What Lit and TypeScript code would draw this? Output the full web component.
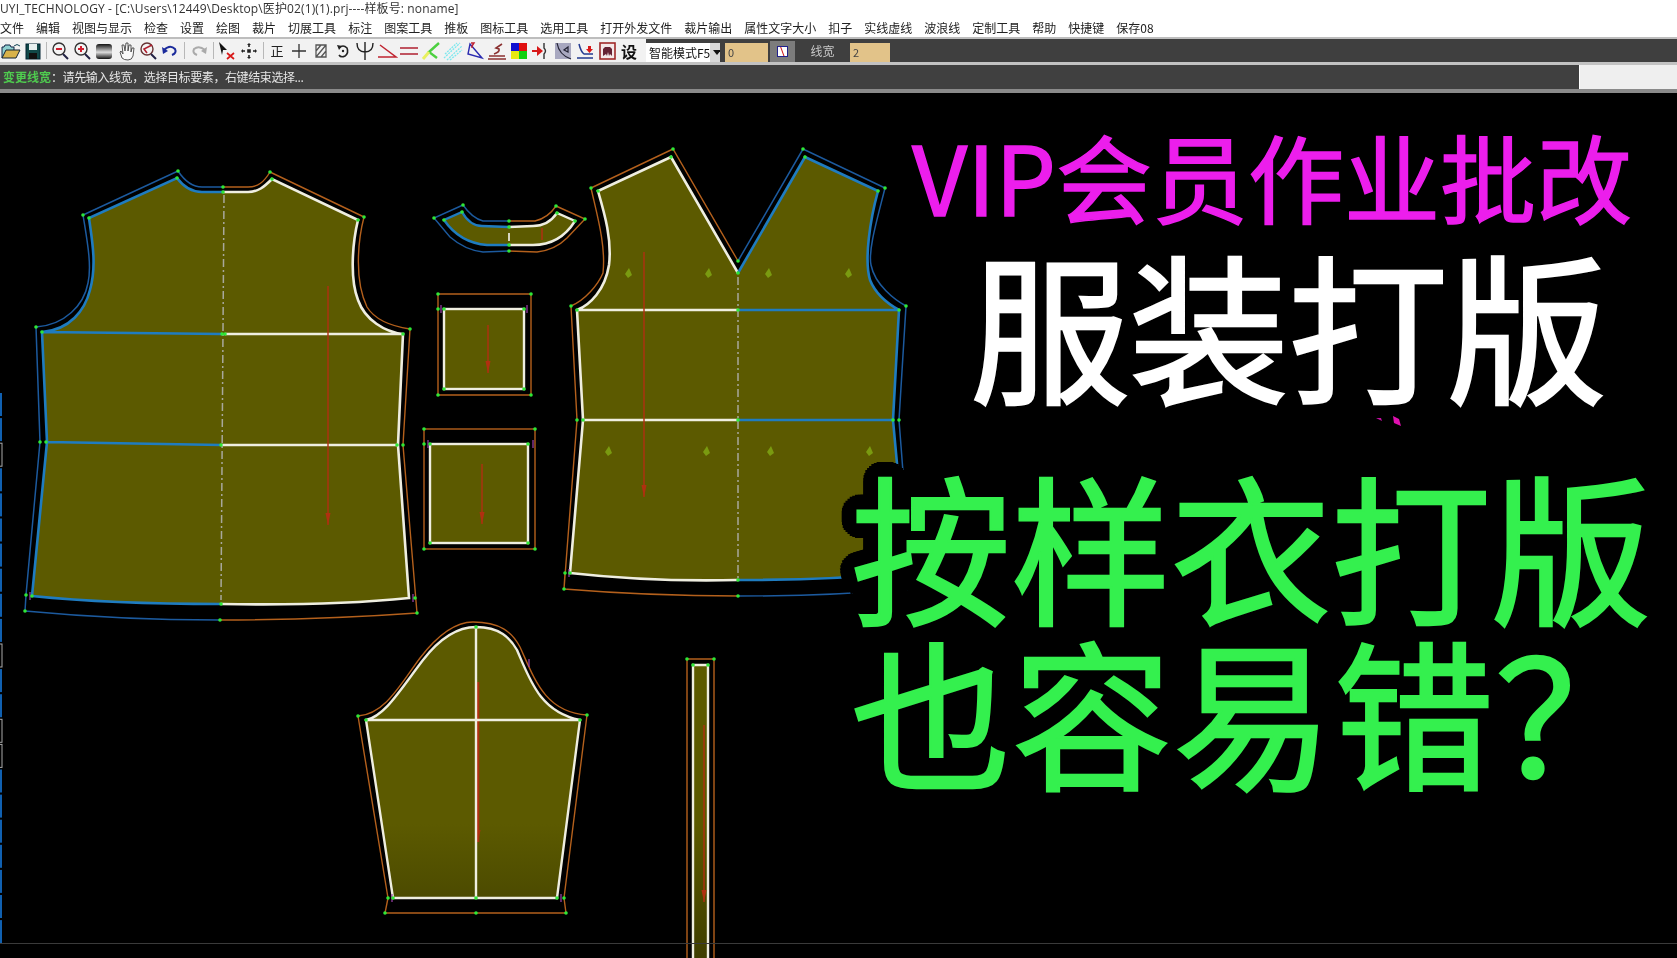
import {LitElement, css, html, svg, unsafeCSS} from 'lit';
import {customElement} from 'lit/decorators.js';

const MENU = [
  '文件', '编辑', '视图与显示', '检查', '设置', '绘图', '裁片', '切展工具', '标注', '图案工具', '推板', '图标工具',
  '选用工具', '打开外发文件', '裁片输出', '属性文字大小', '扣子', '实线虚线', '波浪线', '定制工具', '帮助', '快捷键', '保存08',
];

const icon = (body: unknown) => html`<svg class="ico" viewBox="0 0 22 22">${body}</svg>`;

// toolbar, left to right; 'sep' is a divider with its width
const TOOLS: Array<unknown> = [
  icon(svg`<path d="M2 18V7h2l1-2h5l1 2h3v3" fill="#8fd0d0" stroke="#124" stroke-width="1"/><path d="M2 18l4-8h14l-4 8z" fill="#d8b24a" stroke="#123" stroke-width="1"/><path d="M14 6q3-3 6 0" fill="none" stroke="#145" stroke-width="1"/>`),
  icon(svg`<rect x="4" y="4" width="14" height="15" fill="#114848" stroke="#023" /><rect x="7" y="4" width="8" height="6" fill="#e8f0f0"/><rect x="7" y="13" width="8" height="6" fill="#111"/>`),
  {sep: 5},
  icon(svg`<circle cx="10" cy="9" r="6" fill="#f4f4f4" stroke="#333" stroke-width="1.4"/><path d="M7 9h6" stroke="#d02030" stroke-width="2"/><path d="M14 14l5 5" stroke="#224" stroke-width="2"/>`),
  icon(svg`<circle cx="10" cy="9" r="6" fill="#f4f4f4" stroke="#333" stroke-width="1.4"/><path d="M7 9h6M10 6v6" stroke="#d02030" stroke-width="2"/><path d="M14 14l5 5" stroke="#224" stroke-width="2"/>`),
  icon(svg`<defs><linearGradient id="gr" x1="0" x2="0" y1="0" y2="1"><stop offset="0" stop-color="#111"/><stop offset=".55" stop-color="#ddd"/><stop offset="1" stop-color="#111"/></linearGradient></defs><rect x="3" y="4" width="16" height="15" rx="3" fill="url(#gr)"/>`),
  icon(svg`<path d="M5 12l2 6q2 2 6 2t5-4l1-8-2 0-1 4 0-7-2 0-1 6 0-8-2 0-1 8-1-6-2 0 1 9-2-3z" fill="#f8f8f8" stroke="#444" stroke-width=".9"/>`),
  icon(svg`<circle cx="10" cy="9" r="6" fill="#f4f4f4" stroke="#633" stroke-width="1.4"/><path d="M15 5l-8 4 3 4" fill="none" stroke="#b02030" stroke-width="1.6"/><path d="M14 14l5 5" stroke="#224" stroke-width="2"/>`),
  icon(svg`<path d="M5 10q6-6 11-1 2 4-3 6" fill="none" stroke="#1c2c9c" stroke-width="2"/><path d="M3 7l1 7 5-3z" fill="#1c2c9c"/>`),
  {sep: 7},
  icon(svg`<path d="M17 10q-6-5-11-1-2 4 3 6" fill="none" stroke="#aaa" stroke-width="2"/><path d="M19 7l-1 7-5-3z" fill="#aaa"/>`),
  {sep: 6},
  icon(svg`<path d="M3 2l8 8-4 0-1 5z" fill="#111"/><path d="M11 13l7 6M18 13l-7 6" stroke="#d81818" stroke-width="1.7"/>`),
  icon(svg`<path d="M11 5v2M11 15v2M5 11h2M15 11h2M10 10h2v2h-2z" stroke="#222" stroke-width="1.6"/><path d="M9 5h4l-2-2zM9 17h4l-2 2zM5 9v4l-2-2zM17 9v4l2-2z" fill="#222"/>`),
  {sep: 6},
  html`<span class="glyph">正</span>`,
  icon(svg`<path d="M11 4v14M4 11h14" stroke="#333" stroke-width="1.3"/>`),
  icon(svg`<path d="M6 5h10v12H6z M6 17L16 5M6 11l5-6M11 17l5-6" fill="none" stroke="#555" stroke-width="1.3"/>`),
  icon(svg`<path d="M7 8q4-4 8 0 2 5-2 8-4 2-6-1" fill="none" stroke="#222" stroke-width="1.6"/><path d="M5 5l5 1-3 4z" fill="#222"/><circle cx="11" cy="11" r="1.2" fill="#222"/>`),
  icon(svg`<path d="M3 3q0 9 8 9t8-9M11 2v18" fill="none" stroke="#222" stroke-width="1.4"/>`),
  icon(svg`<path d="M2 17h18L4 5" fill="none" stroke="#c02430" stroke-width="1.5"/>`),
  icon(svg`<path d="M2 8h18M2 14h18" stroke="#b02030" stroke-width="1.6"/>`),
  icon(svg`<path d="M19 3L9 12L17 18" fill="none" stroke="#4cd040" stroke-width="2.4"/><path d="M3 19l6-7" stroke="#e8f060" stroke-width="3"/>`),
  icon(svg`<path d="M2 18L18 3M5 20L20 6M8 20L20 10M3 14L15 3" stroke="#7ce8ee" stroke-width="1.3" stroke-dasharray="2 1"/>`),
  icon(svg`<path d="M6 4l12 14-14-4z" fill="none" stroke="#2a2ab0" stroke-width="1.4"/><path d="M7 3h3l-2 3v2" fill="none" stroke="#c02030" stroke-width="1.4"/>`),
  icon(svg`<path d="M2 19h18M3 16h16M8 14q6-2 5-5l-3-1 6-4" fill="none" stroke="#8a3030" stroke-width="1.6"/>`),
  icon(svg`<rect x="3" y="3" width="8" height="8" fill="#1010d0"/><rect x="11" y="3" width="8" height="8" fill="#e01010"/><rect x="3" y="11" width="8" height="8" fill="#e8e810"/><rect x="11" y="11" width="8" height="8" fill="#10d010"/>`),
  icon(svg`<path d="M2 11h8" stroke="#d81818" stroke-width="2"/><path d="M7 6l6 5-6 5z" fill="#d81818"/><path d="M14 3v5q3 3 0 6v5" fill="none" stroke="#333" stroke-width="1.4"/>`),
  icon(svg`<rect x="3" y="3" width="16" height="16" fill="#a8a8c0"/><path d="M5 3q2 12 14 16M16 7l-4 3 4 2z" fill="none" stroke="#223" stroke-width="1.2"/>`),
  icon(svg`<path d="M5 4q2 8 5 10h9M3 18h16" fill="none" stroke="#223a90" stroke-width="1.5"/><path d="M14 6h3v3h2l-3.500 4L12 9h2z" fill="#d81818"/>`),
  icon(svg`<rect x="4" y="3" width="15" height="16" fill="#f4e8e8" stroke="#a02828" stroke-width="1.6"/><path d="M7 16v-7l2-2h5l2 2v7l-2-2-1 2-1-4-1 4-1-2z" fill="#623"/>`),
  html`<span class="glyph big">设</span>`,
];

const RAIL_BOXES = [2, 10, 13, 14];
const DARTS = [[628, 273], [708, 273], [768, 273], [848, 273], [608, 451], [706, 451], [770, 451], [869, 451]];
const NICKS = [[30, 596], [413, 598], [441, 309], [527, 309], [428, 444], [533, 444], [569, 573], [529, 663], [392, 898], [561, 898]];
const POINTS = [
  [83, 215], [89, 218], [178, 171], [177, 178], [223, 187], [223, 192], [270, 172], [272, 179], [364, 217], [358, 220],
  [36, 327], [42, 332], [222, 334], [225, 334], [403, 334], [410, 329], [40, 442], [46, 442], [221, 445], [397, 445], [403, 445],
  [26, 595], [32, 596], [25, 611], [221, 604], [220, 620], [415, 598], [417, 613],
  [434, 218], [444, 220], [463, 205], [462, 212], [509, 221], [509, 227], [509, 245], [509, 251], [556, 206], [557, 213], [585, 219], [575, 221],
  [438, 294], [531, 294], [438, 309], [444, 309], [524, 309], [444, 389], [524, 389], [438, 395], [531, 395],
  [424, 429], [535, 429], [424, 444], [430, 444], [528, 444], [430, 543], [528, 543], [424, 549], [535, 549],
  [591, 188], [598, 191], [673, 149], [671, 157], [738, 261], [738, 273], [803, 149], [805, 157], [885, 188], [878, 191],
  [571, 306], [577, 310], [738, 310], [899, 310], [906, 306], [577, 420], [583, 420], [738, 420], [893, 420], [899, 420],
  [565, 573], [570, 573], [564, 589], [738, 580], [738, 596],
  [358, 716], [366, 720], [476, 627], [580, 720], [587, 715], [388, 898], [393, 898], [476, 898], [557, 898], [564, 898], [385, 913], [476, 913], [566, 913],
  [687, 659], [714, 659], [693, 665], [708, 665],
];

const BLUE = '#1f7cc0';
const NAVY = '#1c5a9e';
const WHITE = '#efeee0';
const ORANGE = '#b4601c';
const RED = '#b03010';

// round black halo behind the first green line
const HALO = Array.from({length: 36}, (_, i) => {
  const a = (i / 36) * Math.PI * 2;
  return `${(Math.cos(a) * 16).toFixed(1)}px ${(Math.sin(a) * 16).toFixed(1)}px #000`;
}).join(', ');

const seam = (d: string, color: string, w: number) => svg`<path d=${d} fill="none" stroke=${color} stroke-width=${w}/>`;
const grain = (x: number, y1: number, y2: number, w = 1.4) => svg`
  <path d="M${x} ${y1}V${y2}" stroke=${RED} stroke-width=${w}/>
  <path d="M${x - 2.5} ${y2 - 12}L${x} ${y2}L${x + 2.5} ${y2 - 12}Z" fill=${RED}/>`;

@customElement('app-root')
export class AppRoot extends LitElement {
  static styles = css`
    :host {
      display: block;
      width: 1677px;
      height: 958px;
      overflow: hidden;
      background: #000;
      font-family: 'Noto Sans CJK SC', 'Noto Sans', sans-serif;
    }
    .header {
      height: 93px;
      background: #fff;
      display: flex;
      flex-direction: column;
      filter: blur(0.35px);
    }
    .title {
      height: 18px;
      line-height: 17px;
      font-size: 12px;
      letter-spacing: 0.12px;
      color: #333;
      font-family: 'Open Sans', 'Noto Sans CJK SC', sans-serif;
      white-space: nowrap;
    }
    .menu {
      height: 19px;
      display: flex;
      gap: 12px;
      line-height: 20px;
      font-size: 12px;
      color: #222;
      white-space: nowrap;
    }
    .bar {
      height: 25px;
      display: flex;
      border-top: 2px solid #bdbdbd;
      box-sizing: border-box;
      background: #3f3f3f;
    }
    .tools {
      width: 646px;
      flex: none;
      display: flex;
      align-items: center;
      background: #f2f2f2;
    }
    .tool {
      width: 22px;
      height: 22px;
      flex: none;
      display: flex;
      align-items: center;
      justify-content: center;
    }
    .ico {
      width: 22px;
      height: 22px;
    }
    .glyph {
      font-size: 13px;
      color: #222;
    }
    .glyph.big {
      font-size: 16px;
      font-weight: 700;
      color: #111;
    }
    .sep {
      display: flex;
      justify-content: center;
      align-self: stretch;
      flex: none;
    }
    .sep::after {
      content: '';
      width: 1px;
      background: #b8b8b8;
      margin: 3px 0;
    }
    .fields {
      flex: 1;
      display: flex;
      align-items: flex-end;
      font-size: 11px;
    }
    .combo {
      width: 74px;
      height: 19px;
      background: #fff;
      display: flex;
      align-items: center;
      justify-content: space-between;
      font-size: 12px;
      color: #111;
      padding-left: 3px;
      box-sizing: border-box;
      white-space: nowrap;
      overflow: hidden;
    }
    .combo b {
      width: 14px;
      height: 100%;
      flex: none;
      background: #d8d8d8;
      display: flex;
      align-items: center;
      justify-content: center;
    }
    .combo b::after {
      content: '';
      border: 4px solid transparent;
      border-top: 5px solid #111;
      border-bottom: 0;
    }
    .input {
      height: 19px;
      background: #e2c389;
      color: #444;
      padding-left: 3px;
      line-height: 19px;
      box-sizing: border-box;
      margin-left: 5px;
    }
    .input.first {
      width: 43px;
    }
    .input.second {
      width: 40px;
      margin-left: 2px;
    }
    .toggle {
      width: 25px;
      height: 21px;
      background: #7c7c7c;
      margin-left: 2px;
      display: flex;
      align-items: center;
      justify-content: center;
    }
    .toggle span {
      width: 9px;
      height: 9px;
      background: #fff;
      border: 1px solid #20208c;
      position: relative;
      overflow: hidden;
    }
    .toggle span::after {
      content: '';
      position: absolute;
      left: 4px;
      top: -2px;
      width: 1px;
      height: 14px;
      background: #d01818;
      transform: rotate(-20deg);
    }
    .label {
      width: 51px;
      height: 21px;
      margin-left: 2px;
      text-align: center;
      line-height: 20px;
      font-size: 12px;
      color: #c8c8c8;
    }
    .status {
      height: 31px;
      display: flex;
      border-top: 3px solid #c2c2c2;
      border-bottom: 4px solid #8a8a8a;
      box-sizing: border-box;
      background: #404040;
      font-size: 12px;
      line-height: 23px;
      color: #e6e6e6;
      white-space: nowrap;
    }
    .prompt {
      flex: 1;
      padding-left: 3px;
    }
    .prompt em {
      font-style: normal;
      font-weight: 700;
      color: #4fcb4f;
    }
    .prompt span {
      letter-spacing: -0.4px;
    }
    .side {
      width: 97px;
      background: #efefef;
      border-left: 1px solid #fff;
    }
    .canvas {
      position: relative;
      height: 865px;
    }
    .sheet {
      position: absolute;
      left: 0;
      top: -93px;
      width: 1677px;
      height: 958px;
    }
    .headlines {
      position: absolute;
      left: 0;
      top: 34px;
      display: flex;
      flex-direction: column;
      align-items: flex-start;
      white-space: nowrap;
    }
    .line {
      line-height: 1;
      font-size: 160px;
    }
    .vip {
      font-size: 96px;
      margin-left: 912px;
      color: #ec1eec;
      -webkit-text-stroke: 1.5px #ec1eec;
    }
    .cut {
      margin: 19px 0 0 970px;
      letter-spacing: -1px;
      color: #fff;
      -webkit-text-stroke: 2.5px #fff;
    }
    .copy,
    .wrong {
      color: #34f04e;
      -webkit-text-stroke: 2.5px #34f04e;
    }
    .copy {
      margin: 61px 0 0 851px;
      text-shadow: ${unsafeCSS(HALO)};
    }
    .wrong {
      margin: 5px 0 0 851px;
      letter-spacing: 1px;
    }
  `;

  render() {
    return html`
      <div class="header">
        <div class="title">UYI_TECHNOLOGY - [C:\\Users\\12449\\Desktop\\医护02(1)(1).prj----样板号: noname]</div>
        <div class="menu">${MENU.map((m) => html`<span>${m}</span>`)}</div>
        <div class="bar">
          <div class="tools">
            ${TOOLS.map((t) => {
              const sep = (t as {sep?: number}).sep;
              return sep
                ? html`<span class="sep" style="width:${sep}px"></span>`
                : html`<span class="tool">${t}</span>`;
            })}
          </div>
          <div class="fields">
            <div class="combo">智能模式F5<b></b></div>
            <div class="input first">0</div>
            <div class="toggle"><span></span></div>
            <div class="label">线宽</div>
            <div class="input second">2</div>
          </div>
        </div>
        <div class="status">
          <div class="prompt"><em>变更线宽</em><span>：请先输入线宽，选择目标要素，右键结束选择...</span></div>
          <div class="side"></div>
        </div>
      </div>
      <div class="canvas">
        ${this.renderSheet()}
        <div class="headlines">
          <div class="line vip">VIP会员作业批改</div>
          <div class="line cut">服装打版</div>
          <div class="line copy">按样衣打版</div>
          <div class="line wrong">也容易错？</div>
        </div>
      </div>
    `;
  }

  renderSheet() {
    const rail = Array.from({length: 22}, (_, i) => i);
    return html`<svg class="sheet" viewBox="0 0 1677 958">
      <defs>
        <linearGradient id="cloth" gradientUnits="userSpaceOnUse" x1="0" x2="0" y1="0" y2="958">
          <stop offset="0.86" stop-color="#5c5a00"/>
          <stop offset="1" stop-color="#3f3e00"/>
        </linearGradient>
      </defs>
      ${rail.map((i) =>
        RAIL_BOXES.includes(i)
          ? svg`<rect x="-1" y=${393 + i * 25.1} width="3" height="23" fill="none" stroke="#aaa"/>`
          : svg`<rect x="0" y=${393 + i * 25.1} width="2" height="23" fill="#1060b0"/>`
      )}

      <!-- back -->
      <path fill="url(#cloth)" d="M89 218L177 178C183 186 192 192 202 192L248 192C258 192 264 187 272 179L358 220C352 245 350 280 358 300C365 320 385 332 403 334L398 445L409 598Q330 606 221 604Q110 604 32 596L47 442L42 332C70 330 85 310 90 290C97 265 92 240 89 218Z"/>
      ${seam('M223 187L202 187C192 187 184 180 178 171L83 215C87 240 92 265 88 283C84 305 65 325 36 327L40 442L26 595L25 611Q120 620 220 620', NAVY, 1.5)}
      ${seam('M223 187L248 187C258 187 264 182 270 172L364 217C358 240 354 280 367 307C375 320 390 326 410 329L403 445L417 613Q320 620 220 620', ORANGE, 1.4)}
      ${seam('M223 192L202 192C192 192 183 186 177 178L89 218C92 240 97 265 90 290C85 310 70 330 42 332L47 442L32 596Q110 604 221 604M42 332L222 334M47 442L221 445', BLUE, 2.6)}
      ${seam('M223 192L248 192C258 192 264 187 272 179L358 220C352 245 350 280 358 300C365 320 385 332 403 334L398 445L409 598Q330 606 221 604M225 334L403 334M221 445L397 445', WHITE, 2.6)}
      <path d="M224 195L221 600" stroke="#a8a89c" stroke-width="1.500" stroke-dasharray="8 3 2 3"/>
      ${grain(328, 286, 525)}

      <!-- collar -->
      <path fill="url(#cloth)" d="M444 220L462 212Q470 226 482 226L533 226Q548 226 557 213L575 221Q560 245 533 245L487 245Q460 243 444 220Z"/>
      ${seam('M509 221L483 221Q472 218 463 205L434 218L450 237Q465 250 483 252L509 251', NAVY, 1.4)}
      ${seam('M509 221L535 221Q548 218 556 206L585 219L567 238Q555 250 537 252L509 251', ORANGE, 1.4)}
      ${seam('M509 227L482 226Q470 226 462 212L444 220Q460 243 487 245L509 245', BLUE, 2.4)}
      ${seam('M509 227L533 226Q548 226 557 213L575 221Q560 245 533 245L509 245', WHITE, 2.4)}
      <path d="M509 233V241" stroke="#fff" stroke-width="1.500"/>
      <path d="M542 228V240" stroke=${RED} stroke-width="1.500"/>

      <!-- small squares -->
      <rect x="444" y="309" width="80" height="80" fill="url(#cloth)" stroke=${WHITE} stroke-width="2.400"/>
      <path d="M438 309V294H531V395H438V309" fill="none" stroke=${ORANGE} stroke-width="1.400"/>
      ${grain(488, 325, 373)}
      <rect x="430" y="444" width="98" height="99" fill="url(#cloth)" stroke=${WHITE} stroke-width="2.400"/>
      <rect x="424" y="429" width="111" height="120" fill="none" stroke=${ORANGE} stroke-width="1.400"/>
      ${grain(482, 464, 524)}

      <!-- front -->
      <path fill="url(#cloth)" d="M598 191L671 157L738 273L805 157L878 191C870 220 864 260 870 280C876 295 890 305 899 310L893 420L907 573Q830 580 738 580Q650 582 570 573L583 420L577 310C590 305 605 290 609 265C612 240 605 215 598 191Z"/>
      ${seam('M738 261L673 149L591 188C597 215 606 245 603 273C598 285 585 300 571 306L577 420L564 589L565 573M564 589Q650 596 738 596', ORANGE, 1.4)}
      ${seam('M738 261L803 149L885 188C877 220 868 250 871 265C875 285 895 300 906 306L899 420L912 589Q830 596 738 596', NAVY, 1.5)}
      ${seam('M738 273L671 157L598 191C605 215 612 240 609 265C605 290 590 305 577 310L583 420L570 573Q650 582 738 580M577 310L738 310M583 420L738 420', WHITE, 2.6)}
      ${seam('M738 273L805 157L878 191C870 220 864 260 870 280C876 295 890 305 899 310L893 420L907 573Q830 580 738 580M738 310L899 310M738 420L893 420', BLUE, 2.6)}
      <path d="M738 277V578" stroke="#a8a89c" stroke-width="1.500" stroke-dasharray="8 3 2 3"/>
      ${grain(644, 252, 497)}
      ${DARTS.map(([x, y]) => svg`<path d="M${x - 3} ${y + 1}L${x + 1} ${y - 5}L${x + 4} ${y + 2}L${x} ${y + 5}Z" fill="#7a9a10"/>`)}

      <!-- sleeve -->
      <path fill="url(#cloth)" d="M366 720C385 716 400 690 423 660C440 638 458 627 476 627C500 627 510 638 517 650C530 680 540 712 580 720L557 898L393 898Z"/>
      ${seam('M388 898L358 716C385 714 400 685 420 658C440 632 458 622 473 622C500 622 512 632 520 647C535 680 545 712 587 715L564 898L566 913L385 913L388 898', ORANGE, 1.4)}
      ${grain(478, 682, 842, 2.6)}
      ${seam('M393 898L366 720C385 716 400 690 423 660C440 638 458 627 476 627C500 627 510 638 517 650C530 680 540 712 580 720L557 898ZM366 720H580M476 627V898', WHITE, 2.4)}

      <!-- strip -->
      <rect x="693" y="665" width="15" height="293" fill="url(#cloth)"/>
      ${seam('M693 958V665H708V958', WHITE, 2.4)}
      ${seam('M687 958V659H714V958', ORANGE, 1.4)}
      ${grain(704, 725, 902)}

      <rect x="0" y="943" width="1677" height="1" fill="#3a3a3a"/>
      ${NICKS.map(([x, y]) => svg`<path d="M${x} ${y - 4}V${y + 4}" stroke="#a040b0" stroke-width="1.200"/>`)}
      ${POINTS.map(([x, y]) => svg`<circle cx=${x} cy=${y} r="1.800" fill="#2ee836"/>`)}
      <path d="M1393 416L1399 419L1401 426L1394 423Z" fill="#e010b0"/>
      <path d="M1376 418L1381 418L1382 421Z" fill="#c010a0"/>
    </svg>`;
  }
}
